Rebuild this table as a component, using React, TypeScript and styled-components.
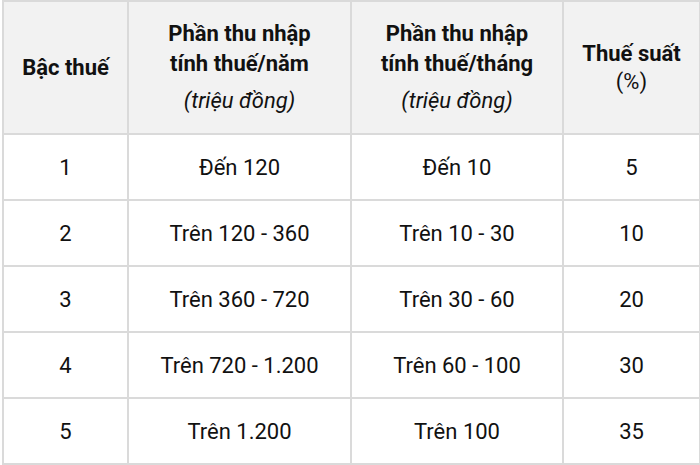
import React from "react";
import styled, { createGlobalStyle } from "styled-components";

const Global = createGlobalStyle`
  html, body { margin: 0; padding: 0; background: #ffffff; }
  body { font-family: Roboto, "Noto Sans", Arial, sans-serif; }
`;

const Wrap = styled.div`
  width: 700px;
  height: 465px;
  padding: 0 1px 0 2px;
  box-sizing: border-box;
  background: #ffffff;
`;

const Table = styled.table`
  border-collapse: collapse;
  table-layout: fixed;
  width: 697px;
  color: #111111;
`;

const Th = styled.th<{ $w: number }>`
  width: ${(p) => p.$w}px;
  height: 133px;
  padding: 0;
  background: #f2f2f2;
  border: 2px solid #dadada;
  font-size: 22px;
  font-weight: 700;
  text-align: center;
  vertical-align: middle;
  line-height: 30px;
  box-sizing: border-box;
`;

const Sub = styled.div<{ $italic?: boolean; $gap: number }>`
  font-weight: 400;
  font-style: ${(p) => (p.$italic ? "italic" : "normal")};
  margin-top: ${(p) => p.$gap}px;
`;

const Td = styled.td`
  height: 66px;
  padding: 0;
  border: 2px solid #dadada;
  font-size: 22px;
  font-weight: 400;
  text-align: center;
  vertical-align: middle;
  box-sizing: border-box;
`;

const rows = [
  ["1", "Đến 120", "Đến 10", "5"],
  ["2", "Trên 120 - 360", "Trên 10 - 30", "10"],
  ["3", "Trên 360 - 720", "Trên 30 - 60", "20"],
  ["4", "Trên 720 - 1.200", "Trên 60 - 100", "30"],
  ["5", "Trên 1.200", "Trên 100", "35"],
];

export default function App() {
  return (
    <Wrap>
      <Global />
      <Table>
        <thead>
          <tr>
            <Th $w={125}>Bậc thuế</Th>
            <Th $w={223}>
              Phần thu nhập
              <br />
              tính thuế/năm
              <Sub $italic $gap={7}>(triệu đồng)</Sub>
            </Th>
            <Th $w={212}>
              Phần thu nhập
              <br />
              tính thuế/tháng
              <Sub $italic $gap={7}>(triệu đồng)</Sub>
            </Th>
            <Th $w={137}>
              Thuế suất
              <Sub $gap={-2}>(%)</Sub>
            </Th>
          </tr>
        </thead>
        <tbody>
          {rows.map((r) => (
            <tr key={r[0]}>
              {r.map((c, i) => (
                <Td key={i}>{c}</Td>
              ))}
            </tr>
          ))}
        </tbody>
      </Table>
    </Wrap>
  );
}
